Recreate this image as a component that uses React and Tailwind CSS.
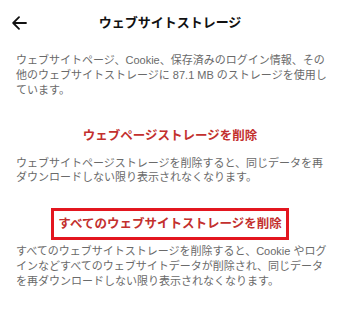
import React from "react";

const font = { fontFamily: '"Liberation Sans", "Noto Sans CJK JP", sans-serif' };

export default function App() {
  return (
    <div className="w-[340px] h-[330px] bg-white text-[#6a6a6a]" style={font}>
      <div className="relative h-[46px] flex items-center justify-center">
        <svg className="absolute left-[12px] top-[16px]" width="15" height="14" viewBox="0 0 15 14" fill="none" stroke="#111" strokeWidth="1.8" strokeLinecap="round" strokeLinejoin="round">
          <path d="M14 7H1.5M7 1.2L1.2 7L7 12.8" />
        </svg>
        <div className="text-[13px] font-bold text-[#111]">ウェブサイトストレージ</div>
      </div>
      <div className="px-4 pt-[7px] text-[11px] leading-[15px] whitespace-nowrap">
        ウェブサイトページ、Cookie、保存済みのログイン情報、その<br />
        他のウェブサイトストレージに 87.1 MB のストレージを使用し<br />
        ています。
      </div>
      <div className="mt-[30px] text-center text-[12.5px] leading-[16px] font-bold text-[#c3302e]">
        ウェブページストレージを削除
      </div>
      <div className="px-4 mt-[12px] text-[11px] leading-[14px] whitespace-nowrap">
        ウェブサイトページストレージを削除すると、同じデータを再<br />
        ダウンロードしない限り表示されなくなります。
      </div>
      <div className="mt-[24px] flex justify-center">
        <div className="w-[238px] h-[32px] border-[3px] border-[#e3161f] flex items-center justify-center text-[12.5px] font-bold text-[#c3302e]">
          すべてのウェブサイトストレージを削除
        </div>
      </div>
      <div className="px-4 mt-[4px] text-[11px] leading-[15px] whitespace-nowrap">
        すべてのウェブサイトストレージを削除すると、Cookie やログ<br />
        インなどすべてのウェブサイトデータが削除され、同じデータ<br />
        を再ダウンロードしない限り表示されなくなります。
      </div>
    </div>
  );
}
